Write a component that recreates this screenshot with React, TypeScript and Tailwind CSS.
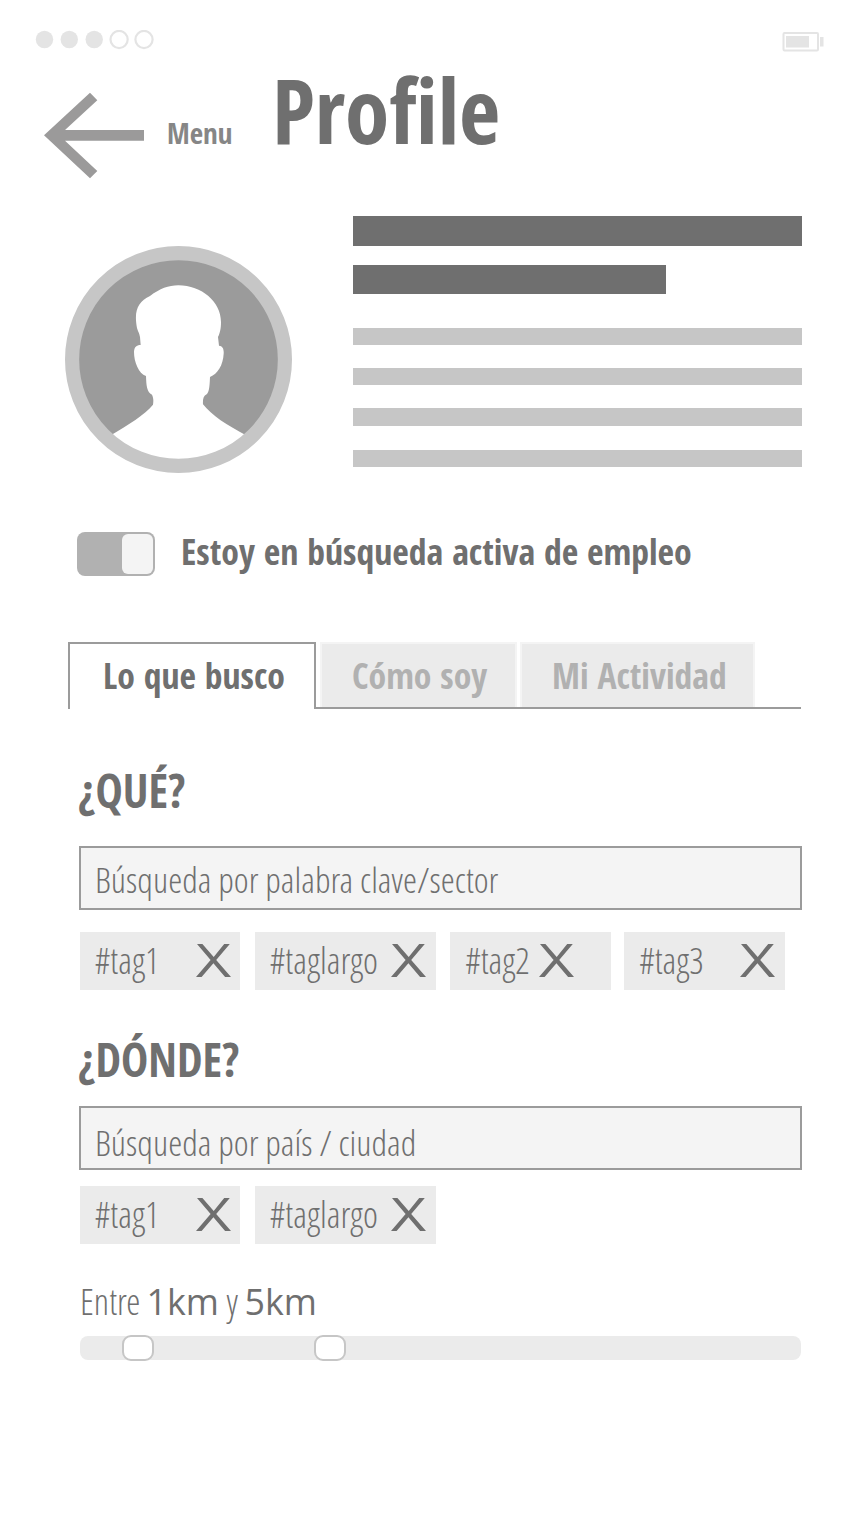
import React from "react";

const bold = "font-['Open_Sans_Condensed','Open_Sans',sans-serif] [font-stretch:75%] font-bold whitespace-nowrap leading-none";
const light = "font-['Open_Sans_Condensed_Light','Open_Sans',sans-serif] [font-stretch:75%] font-light whitespace-nowrap leading-none";
const regular = "font-['Open_Sans',sans-serif] [font-stretch:100%] font-normal whitespace-nowrap leading-none";

function StatusBar() {
  return (
    <div className="flex h-[60px] justify-between pl-[35px] pr-[38px] pt-[30px]">
      <svg width="120" height="20" viewBox="35 30 120 20" fill="#e4e4e4">
        <circle cx="44.5" cy="39.5" r="8.7" />
        <circle cx="69.3" cy="39.5" r="8.7" />
        <circle cx="94.2" cy="39.5" r="8.7" />
        <circle cx="119.1" cy="39.5" r="8.6" fill="none" stroke="#e4e4e4" strokeWidth="2.2" />
        <circle cx="144" cy="39.5" r="8.6" fill="none" stroke="#e4e4e4" strokeWidth="2.2" />
      </svg>
      <svg width="42" height="24" viewBox="782 30 42 24">
        <rect x="783.5" y="33" width="34.5" height="17.5" rx="1" fill="none" stroke="#e4e4e4" strokeWidth="2" />
        <rect x="786" y="36" width="23" height="11.5" fill="#e4e4e4" />
        <rect x="820" y="37" width="3.5" height="9.5" fill="#e4e4e4" />
      </svg>
    </div>
  );
}

function Avatar() {
  return (
    <svg width="227" height="227" viewBox="45 32 681 681" className="mt-[30px] block">
      <circle cx="385.5" cy="372.5" r="310" fill="#9b9b9b" />
      <path
        fill="#fff"
        d="M180 601 C235 568 285 538 309 508 C311 495 310 487 306 478 C290 470 289 450 288 422 C266 415 252 380 252 350 C253 335 259 329 272 329 L270 305 C268 293 265 291 261 278 C251 225 264 200 300 182 C330 160 355 150 385 150 C455 150 513 200 513 260 C513 280 510 292 504 305 L507 331 C518 332 522 340 521 355 C519 390 503 415 480 425 C479 450 478 470 470 477 C460 482 458 492 459 507 C485 540 530 570 591 601 A308 308 0 0 1 180 601 Z"
      />
      <circle cx="385.5" cy="372.5" r="319.25" fill="none" stroke="#c6c6c6" strokeWidth="42.5" />
    </svg>
  );
}

function Cross({ className }: { className: string }) {
  return (
    <svg width="35" height="33" viewBox="0 0 35 33" className={`absolute top-[12px] ${className}`} fill="#6f6f6f">
      <path d="M1 0H6.4L17.7 12.9L28.2 0H33.8L20.2 16L35 33H29.1L17.4 19.3L5.6 33H0L14.6 16Z" />
    </svg>
  );
}

function Tag({ label, width, cross }: { label: string; width: string; cross: string }) {
  return (
    <div className={`relative h-[58px] bg-[#ebebeb] pl-[15px] pt-[11px] ${width}`}>
      <div className={`${light} text-[36px]`}>{label}</div>
      <Cross className={cross} />
    </div>
  );
}

function SearchBox({ text, pad }: { text: string; pad: string }) {
  return (
    <div className={`h-[64px] w-[723px] border-2 border-[#9b9b9b] bg-[#f4f4f4] pl-[14px] ${pad}`}>
      <div className={`${light} text-[35.8px]`}>{text}</div>
    </div>
  );
}

export default function App() {
  return (
    <div className="h-[1533px] w-[862px] overflow-hidden bg-white text-[#6f6f6f]">
      <StatusBar />

      <header className="flex h-[156px] pl-[44px]">
        <svg width="101" height="88" viewBox="44 91 101 88" className="mt-[31px] shrink-0">
          <path fill="#9b9a9a" d="M44 135.3 90 92.7 97.3 100.3 65 130H144V140.7H65L97.3 171 90 178.3Z" />
        </svg>
        <div className={`${bold} ml-[22px] mt-[58px] w-[105px] text-[29px] text-[#868686]`}>Menu</div>
        <h1 className={`${bold} mt-[5px] text-[89.5px]`}>Profile</h1>
      </header>

      <section className="flex h-[316px] pl-[65px]">
        <Avatar />
        <div className="ml-[61px] w-[449px]">
          <div className="h-[30px] bg-[#6f6f6f]" />
          <div className="mt-[19px] h-[29px] w-[313px] bg-[#6f6f6f]" />
          <div className="mt-[34px] h-[17px] bg-[#c6c6c6]" />
          <div className="mt-[23px] h-[17px] bg-[#c6c6c6]" />
          <div className="mt-[23px] h-[18px] bg-[#c6c6c6]" />
          <div className="mt-[24px] h-[17px] bg-[#c6c6c6]" />
        </div>
      </section>

      <section className="flex h-[110px] pl-[77px]">
        <div className="flex h-[44px] w-[78px] justify-end rounded-[8px] bg-[#b1b1b1] p-[2px]">
          <div className="h-full w-[31px] rounded-[6px] bg-[#f4f4f4]" />
        </div>
        <div className={`${bold} ml-[26px] mt-[2px] text-[35.8px]`}>Estoy en búsqueda activa de empleo</div>
      </section>

      <nav className="ml-[68px] flex h-[67px] w-[733px] text-[35.7px]">
        <div className={`${bold} w-[248px] border-x-2 border-t-2 border-[#9b9b9b] pl-[33px] pt-[14px]`}>
          Lo que busco
        </div>
        <div className="flex flex-1 border-b-2 border-[#9b9b9b] pl-[4px] text-[#b1b1b1]">
          <div className={`${bold} w-[197px] border-x-2 border-t-2 border-[#f4f4f4] bg-[#ebebeb] pl-[30px] pt-[14px]`}>
            Cómo soy
          </div>
          <div className={`${bold} ml-[3px] w-[235px] border-x-2 border-t-2 border-[#f4f4f4] bg-[#ebebeb] pl-[30px] pt-[14px]`}>
            Mi Actividad
          </div>
        </div>
      </nav>

      <main className="pl-[79px]">
        <h2 className={`${bold} -ml-px h-[137px] pt-[59px] text-[45.8px]`}>¿QUÉ?</h2>
        <SearchBox text="Búsqueda por palabra clave/sector" pad="pt-[14px]" />
        <div className="ml-px mt-[22px] flex">
          <Tag label="#tag1" width="w-[160px]" cross="left-[116px]" />
          <div className="w-[15px]" />
          <Tag label="#taglargo" width="w-[181px]" cross="left-[136px]" />
          <div className="w-[14.4px]" />
          <Tag label="#tag2" width="w-[161px]" cross="left-[88.6px]" />
          <div className="w-[13px]" />
          <Tag label="#tag3" width="w-[161px]" cross="left-[115.6px]" />
        </div>

        <h2 className={`${bold} -ml-px h-[116px] pt-[47px] text-[45.8px]`}>¿DÓNDE?</h2>
        <SearchBox text="Búsqueda por país / ciudad" pad="pt-[17px]" />
        <div className="ml-px mt-[16px] flex gap-[15px]">
          <Tag label="#tag1" width="w-[160px]" cross="left-[116px]" />
          <Tag label="#taglargo" width="w-[181px]" cross="left-[136px]" />
        </div>

        <div className="ml-px mt-[40px] flex h-[36px] text-[36px]">
          <span className={`${light} w-[66.5px]`}>Entre</span>
          <span className={`${regular} w-[80px] text-[35.8px]`}>1km</span>
          <span className={`${light} w-[18px]`}>y</span>
          <span className={`${regular} text-[35.8px]`}>5km</span>
        </div>
        <div className="ml-px mt-[16px] flex h-[24px] w-[721px] items-center rounded-[8px] bg-[#ebebeb]">
          <div className="ml-[42px] h-[26px] w-[32px] shrink-0 rounded-[9px] border-2 border-[#c6c6c6] bg-white" />
          <div className="ml-[160px] h-[26px] w-[32px] shrink-0 rounded-[9px] border-2 border-[#c6c6c6] bg-white" />
        </div>
      </main>
    </div>
  );
}
